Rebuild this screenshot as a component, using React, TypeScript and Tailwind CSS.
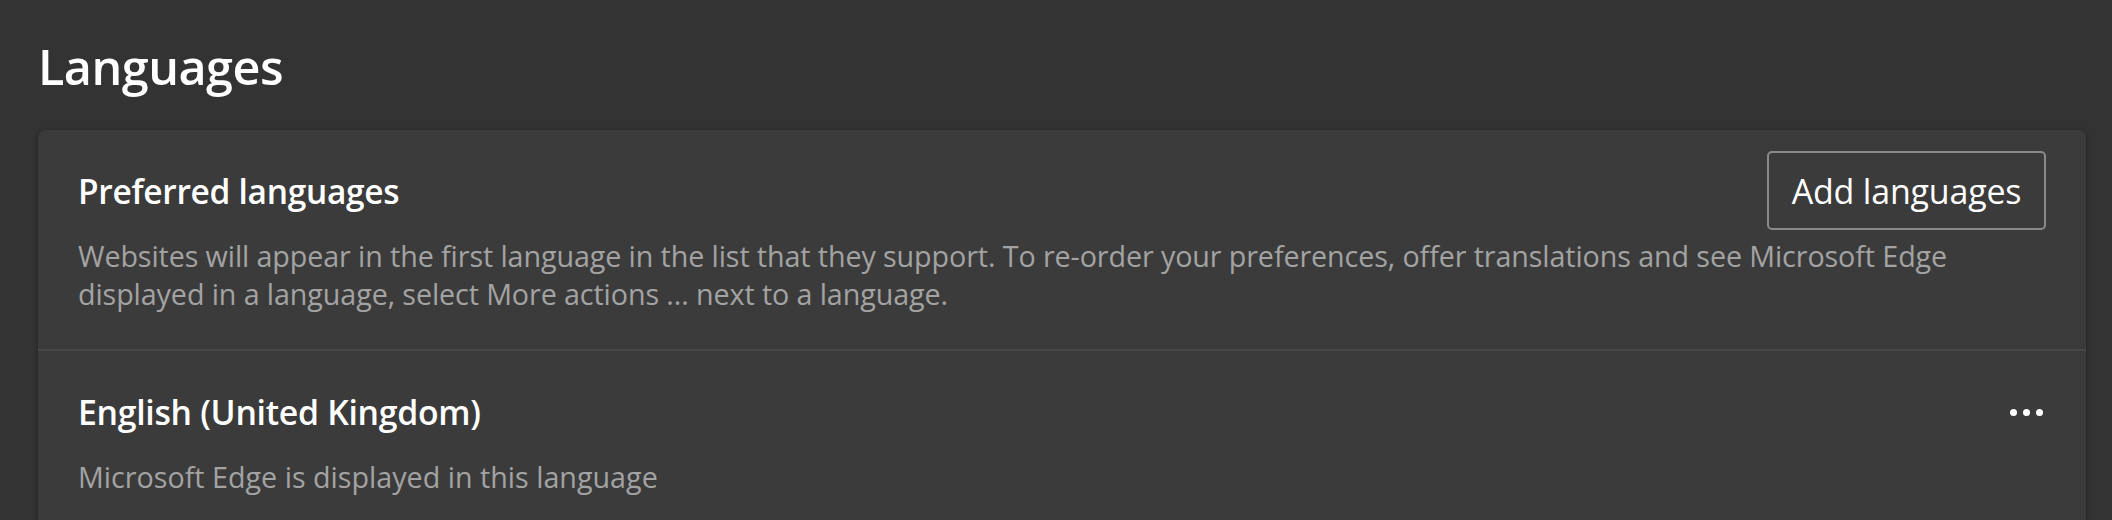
import React from "react";

export default function App() {
  const font = { fontFamily: '"Open Sans", "Noto Sans", sans-serif' };
  return (
    <div className="w-full h-[520px] overflow-hidden bg-[#333333] pl-[38px] pr-[26px] pt-[31px]" style={font}>
      <h1 className="text-[48.5px] leading-[70px] font-semibold text-white tracking-[-0.5px]">Languages</h1>
      <div className="mt-[29px] rounded-[8px] bg-[#3b3b3b] shadow-[0_1px_4px_rgba(0,0,0,0.35)]">
        <div className="px-[40px] pt-[21px] pb-[36px] border-b-[2px] border-[#474747]">
          <div className="flex items-center justify-between">
            <h2 className="text-[33.5px] leading-[40px] font-semibold text-white tracking-[-0.3px]">Preferred languages</h2>
            <button className="h-[79px] w-[279px] rounded-[5px] border-[2px] border-[#8a8a8a] text-[34px] leading-[40px] text-white tracking-[-0.2px]">
              Add languages
            </button>
          </div>
          <p className="mt-[7px] text-[28.7px] leading-[38px] text-[#a3a3a3] tracking-[-0.1px]">
            Websites will appear in the first language in the list that they support. To re-order your preferences, offer translations and see Microsoft Edge displayed in a language, select More actions ... next to a language.
          </p>
        </div>
        <div className="px-[40px] pt-[41px] pb-[40px]">
          <div className="flex items-center justify-between">
            <h3 className="text-[33.8px] leading-[40px] font-semibold text-white tracking-[-0.3px]">English (United Kingdom)</h3>
            <button className="mr-[3px] flex items-center gap-[6px]" aria-label="More actions">
              <span className="w-[7px] h-[7px] rounded-full bg-white" />
              <span className="w-[7px] h-[7px] rounded-full bg-white" />
              <span className="w-[7px] h-[7px] rounded-full bg-white" />
            </button>
          </div>
          <p className="mt-[26px] text-[28.7px] leading-[38px] text-[#a3a3a3]">
            Microsoft Edge is displayed in this language
          </p>
        </div>
      </div>
    </div>
  );
}
